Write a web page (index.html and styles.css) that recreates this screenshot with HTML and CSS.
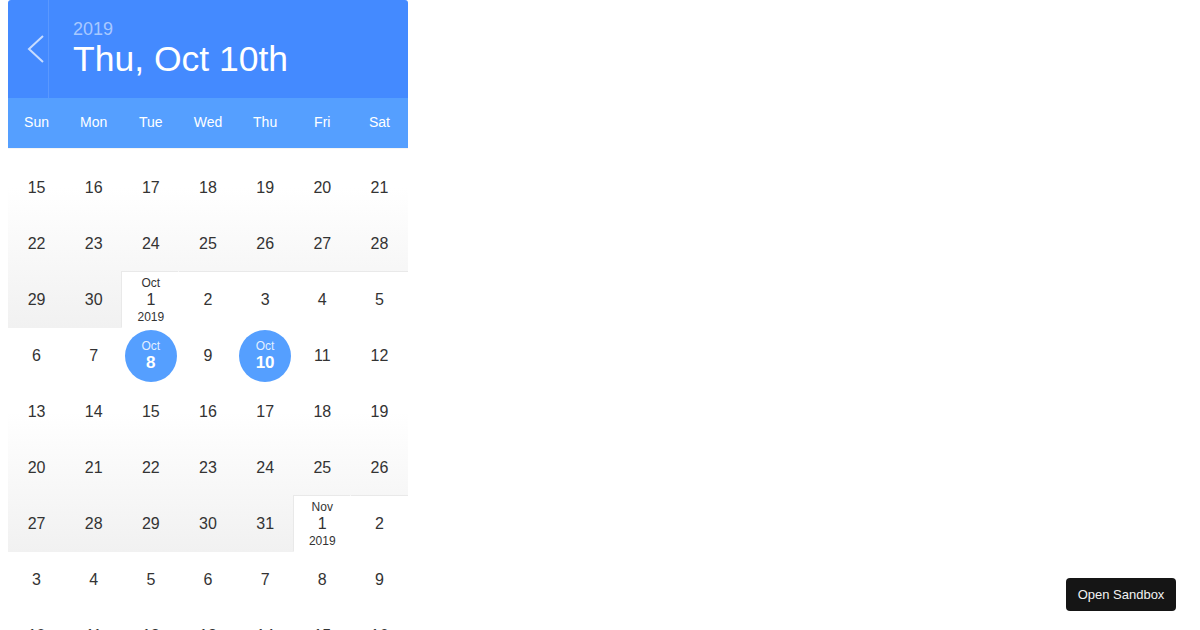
FILE: index.html
```
<!DOCTYPE html>
<html>
<head>
<meta charset="utf-8">
<link rel="stylesheet" href="styles.css">
</head>
<body>
<div class="cal">
  <div class="header">
    <div class="back">
      <svg width="40" height="98" viewBox="0 0 40 98"><path d="M35 36 L21 49 L35 62" fill="none" stroke="rgba(255,255,255,0.7)" stroke-width="2"/></svg>
    </div>
    <div class="title">
      <div class="year">2019</div>
      <div class="date">Thu, Oct 10th</div>
    </div>
  </div>
  <div class="weekdays">
    <span>Sun</span><span>Mon</span><span>Tue</span><span>Wed</span><span>Thu</span><span>Fri</span><span>Sat</span>
  </div>
  <div class="list">
    <div class="row">
      <div class="day sep">15</div><div class="day sep">16</div><div class="day sep">17</div><div class="day sep">18</div><div class="day sep">19</div><div class="day sep">20</div><div class="day sep">21</div>
    </div>
    <div class="row">
      <div class="day sep">22</div><div class="day sep">23</div><div class="day sep">24</div><div class="day sep">25</div><div class="day sep">26</div><div class="day sep">27</div><div class="day sep">28</div>
    </div>
    <div class="row">
      <div class="day sep last">29</div><div class="day sep last">30</div>
      <div class="day first firstday"><span class="lbl">Oct</span><span class="num">1</span><span class="lbl">2019</span></div>
      <div class="day first">2</div><div class="day first">3</div><div class="day first">4</div><div class="day first">5</div>
    </div>
    <div class="row">
      <div class="day oct">6</div><div class="day oct">7</div>
      <div class="day oct"><div class="sel"><span class="sel-m">Oct</span><span class="sel-d">8</span></div></div>
      <div class="day oct">9</div>
      <div class="day oct"><div class="sel"><span class="sel-m">Oct</span><span class="sel-d">10</span></div></div>
      <div class="day oct">11</div><div class="day oct">12</div>
    </div>
    <div class="row">
      <div class="day oct">13</div><div class="day oct">14</div><div class="day oct">15</div><div class="day oct">16</div><div class="day oct">17</div><div class="day oct">18</div><div class="day oct">19</div>
    </div>
    <div class="row">
      <div class="day oct">20</div><div class="day oct">21</div><div class="day oct">22</div><div class="day oct">23</div><div class="day oct">24</div><div class="day oct">25</div><div class="day oct">26</div>
    </div>
    <div class="row">
      <div class="day oct last">27</div><div class="day oct last">28</div><div class="day oct last">29</div><div class="day oct last">30</div><div class="day oct last">31</div>
      <div class="day first firstday"><span class="lbl">Nov</span><span class="num">1</span><span class="lbl">2019</span></div>
      <div class="day first">2</div>
    </div>
    <div class="row">
      <div class="day">3</div><div class="day">4</div><div class="day">5</div><div class="day">6</div><div class="day">7</div><div class="day">8</div><div class="day">9</div>
    </div>
    <div class="row">
      <div class="day">10</div><div class="day">11</div><div class="day">12</div><div class="day">13</div><div class="day">14</div><div class="day">15</div><div class="day">16</div>
    </div>
  </div>
</div>
<a class="sandbox">Open Sandbox</a>
</body>
</html>
```
FILE: styles.css
```
html, body {
  margin: 0;
  padding: 0;
  background: #fff;
  overflow: hidden;
}
body {
  padding-left: 8px;
  font-family: "Liberation Sans", Arial, Helvetica, sans-serif;
  height: 630px;
}
.cal {
  width: 400px;
}
.header {
  height: 98px;
  background: #448AFF;
  border-radius: 3px 3px 0 0;
  display: flex;
  color: #fff;
}
.back {
  width: 40px;
  height: 98px;
  border-right: 1px solid rgba(255,255,255,0.12);
}
.back svg {
  display: block;
}
.title {
  padding: 20px 0 0 24px;
}
.year {
  font-size: 18px;
  line-height: 18px;
  color: rgba(255,255,255,0.55);
}
.date {
  font-size: 35.5px;
  line-height: 36px;
  margin-top: 3px;
}
.weekdays {
  height: 48px;
  padding-bottom: 2px;
  background: #559FFF;
  display: grid;
  grid-template-columns: repeat(7, 1fr);
  align-items: center;
  color: #fff;
  font-size: 14px;
  text-align: center;
  box-shadow: 0 1px 0 rgba(0,0,0,0.04);
}
.list {
  padding-top: 12px;
  height: 600px;
  overflow: hidden;
}
.row {
  display: grid;
  grid-template-columns: repeat(7, 1fr);
  height: 56px;
}
.day {
  display: flex;
  align-items: center;
  justify-content: center;
  font-size: 16px;
  color: #333;
  background: #fff;
}
.day.sep {
  background: linear-gradient(to bottom, #fff 188px, #f1f1f1 328px) fixed;
}
.day.oct {
  background: linear-gradient(to bottom, #fff 412px, #f1f1f1 552px) fixed;
}
.day.last {
  box-shadow: 0 1px 0 #ececec;
}
.day.first {
  background: #fff;
  box-shadow: 0 -1px 0 #e9e9e9;
  position: relative;
}
.day.firstday {
  box-shadow: -1px -1px 0 #e9e9e9;
  flex-direction: column;
}
.lbl {
  font-size: 12px;
  line-height: 14px;
  color: #333;
}
.num {
  font-size: 16px;
  line-height: 20px;
}
.sel {
  width: 52px;
  height: 52px;
  border-radius: 50%;
  background: #559FFF;
  color: #fff;
  display: flex;
  flex-direction: column;
  align-items: center;
  justify-content: center;
}
.sel-m {
  font-size: 12px;
  line-height: 14px;
  color: rgba(255,255,255,0.85);
}
.sel-d {
  font-size: 17px;
  line-height: 20px;
  font-weight: bold;
}
.sandbox {
  position: fixed;
  right: 24px;
  bottom: 19px;
  width: 110px;
  height: 33px;
  background: #151515;
  color: #f2f2f2;
  border-radius: 4px;
  font-size: 13px;
  display: flex;
  align-items: center;
  justify-content: center;
}
```
